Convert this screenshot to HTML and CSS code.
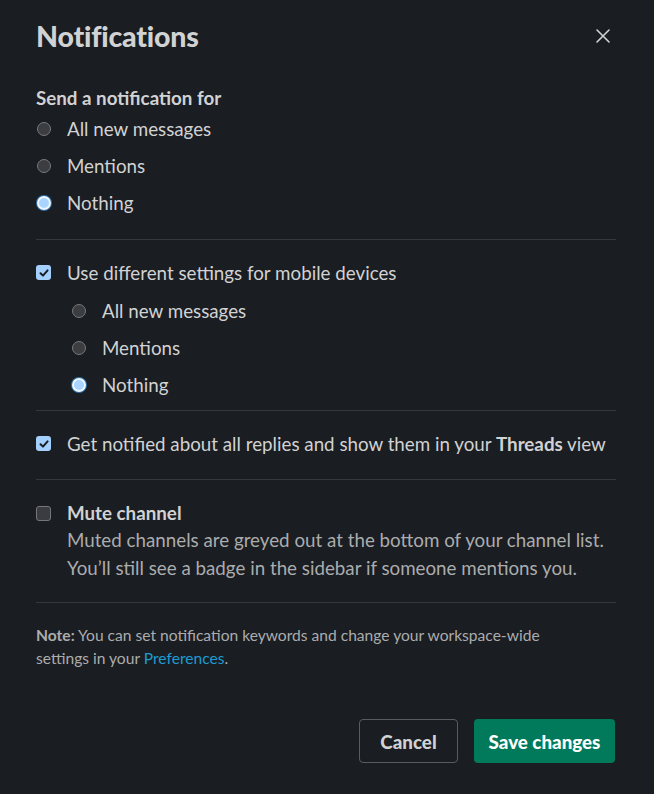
FILE: index.html
```html
<!DOCTYPE html>
<html lang="en">
<head>
<meta charset="utf-8">
<title>Notifications</title>
<link rel="stylesheet" href="styles.css">
</head>
<body>
<div class="modal">
  <header class="modal-header">
    <h1 class="modal-title">Notifications</h1>
    <button class="close-btn" aria-label="Close">
      <svg width="16" height="16" viewBox="0 0 16 16"><path d="M2 2 L14 14 M14 2 L2 14" stroke="#d1d2d3" stroke-width="1.6" stroke-linecap="round" fill="none"/></svg>
    </button>
  </header>

  <section class="section s1">
    <div class="label">Send a notification for</div>
    <div class="row"><span class="radio"></span><span>All new messages</span></div>
    <div class="row"><span class="radio"></span><span>Mentions</span></div>
    <div class="row"><span class="radio checked"></span><span>Nothing</span></div>
  </section>

  <section class="section s2">
    <div class="row"><span class="check checked"><svg viewBox="0 0 14 14" width="14" height="14"><path d="M3.5 7.2 L6 9.6 L10.6 4.4" stroke="#1a1d21" stroke-width="2" fill="none" stroke-linecap="round" stroke-linejoin="round"/></svg></span><span>Use different settings for mobile devices</span></div>
    <div class="sub">
      <div class="row"><span class="radio"></span><span>All new messages</span></div>
      <div class="row"><span class="radio"></span><span>Mentions</span></div>
      <div class="row"><span class="radio checked"></span><span>Nothing</span></div>
    </div>
  </section>

  <section class="section s3">
    <div class="row"><span class="check checked"><svg viewBox="0 0 14 14" width="14" height="14"><path d="M3.5 7.2 L6 9.6 L10.6 4.4" stroke="#1a1d21" stroke-width="2" fill="none" stroke-linecap="round" stroke-linejoin="round"/></svg></span><span>Get notified about all replies and show them in your <b>Threads</b> view</span></div>
  </section>

  <section class="section s4">
    <div class="mute">
      <span class="check"></span>
      <div class="mute-text">
        <div class="mute-title">Mute channel</div>
        <div class="mute-desc">Muted channels are greyed out at the bottom of your channel list. You’ll still see a badge in the sidebar if someone mentions you.</div>
      </div>
    </div>
  </section>

  <section class="section s5">
    <p class="note"><b>Note:</b> You can set notification keywords and change your workspace-wide settings in your <a href="#" class="link">Preferences</a>.</p>
  </section>

  <footer class="footer">
    <button class="btn btn-cancel">Cancel</button>
    <button class="btn btn-save">Save changes</button>
  </footer>
</div>
</body>
</html>
```

FILE: styles.css
```css
* { box-sizing: border-box; }
html, body { margin: 0; padding: 0; background: #1a1d21; }
body {
  font-family: Lato, "Open Sans", "Liberation Sans", sans-serif;
  color: #d1d2d3;
  width: 654px;
  height: 794px;
  overflow: hidden;
}
.modal {
  width: 654px;
  height: 794px;
  padding: 18px 38px 0 36px;
  background: #1a1d21;
  border-bottom-right-radius: 8px;
}
.modal-header {
  display: flex;
  justify-content: space-between;
  align-items: center;
  height: 36px;
}
.modal-title {
  margin: 0;
  font-size: 28.5px;
  font-weight: 900;
  line-height: 36px;
  color: #d1d2d3;
  letter-spacing: -0.2px;
}
.close-btn {
  background: none;
  border: none;
  padding: 0;
  width: 16px;
  height: 16px;
  margin-right: 5px;
  display: flex;
}
.section { border-top: 1px solid #35373b; }
.s1 { border-top: none; margin-top: 32px; padding-bottom: 18px; }
.label { font-weight: 700; font-size: 18.75px; line-height: 24px; }
.row {
  display: flex;
  align-items: center;
  gap: 16px;
  height: 37px;
  font-size: 18.75px;
  line-height: 24px;
  white-space: nowrap;
}
.row b { font-weight: 700; }
.radio {
  width: 14px;
  height: 14px;
  border-radius: 50%;
  background: #3b3d40;
  border: 1px solid #77797c;
  flex: none;
  margin-left: 1px;
}
.radio.checked {
  background: #a9d4ff;
  border: 2px solid #eef6ff;
  box-shadow: 0 0 0 1px #2d6fa8;
}
.check {
  width: 15px;
  height: 15px;
  border-radius: 3px;
  flex: none;
  background: #3a3c40;
  border: 1px solid #74767a;
  display: flex;
  align-items: center;
  justify-content: center;
}
.check.checked {
  background: #a4d0ff;
  border: none;
}
.s2 { padding: 14px 0 7px; }
.sub { padding-left: 35px; margin-top: 1px; }
.s3 { padding: 14px 0 17px; }
.s4 { padding: 20px 0 20px; }
.mute { display: flex; gap: 16px; align-items: flex-start; }
.mute .check { margin-top: 6px; }
.mute-title { font-weight: 700; font-size: 18.75px; line-height: 26px; }
.mute-desc { font-size: 18.75px; line-height: 28px; color: #abacae; }
.s5 { padding-top: 21px; }
.note {
  margin: 0;
  max-width: 555px;
  font-size: 15.6px;
  line-height: 23px;
  color: #abacae;
}
.note b { font-weight: 700; }
.link { color: #1d9bd1; text-decoration: none; }
.footer {
  display: flex;
  justify-content: flex-end;
  gap: 16px;
  margin-top: 49px;
  padding-right: 1px;
}
.btn {
  font-family: inherit;
  height: 44px;
  font-size: 18.75px;
  font-weight: 900;
  border-radius: 4px;
  padding: 0;
  white-space: nowrap;
}
.btn-cancel {
  width: 99px;
  background: transparent;
  color: #d1d2d3;
  border: 1px solid #595b5f;
}
.btn-save {
  width: 141px;
  background: #007a5a;
  color: #ffffff;
  border: none;
}
```
